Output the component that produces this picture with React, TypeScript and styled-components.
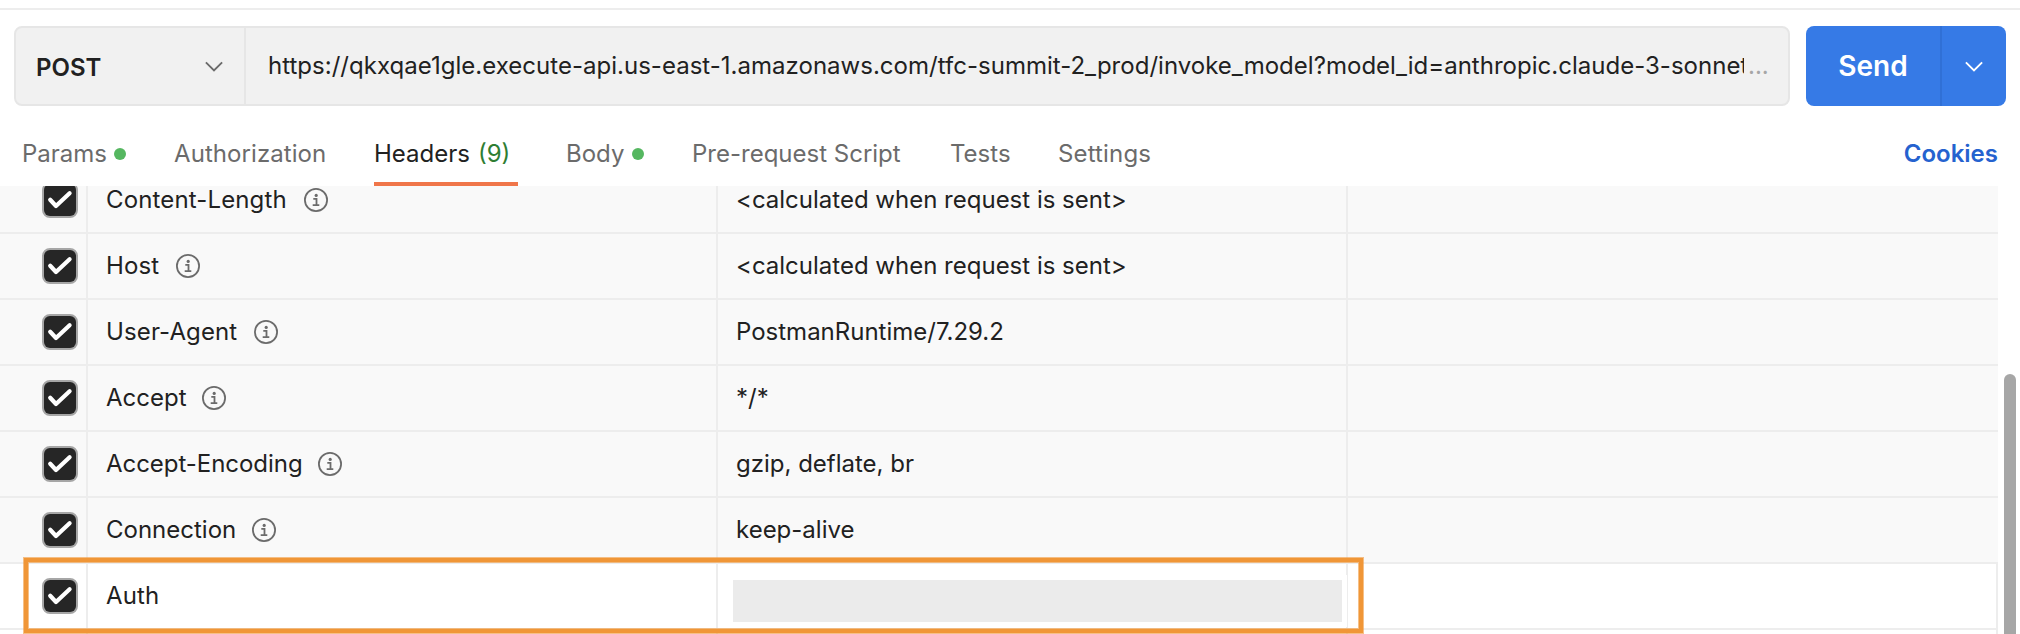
import React from 'react';
import styled, { createGlobalStyle } from 'styled-components';

const GlobalStyle = createGlobalStyle`
  *, *::before, *::after { box-sizing: border-box; }
  html, body { margin: 0; background: #fff; overflow: hidden; }
  body { font-family: Inter, "Liberation Sans", sans-serif; font-size: 24px; color: #212121; }
  button { font: inherit; border: 0; padding: 0; background: none; color: inherit; }
`;

const Page = styled.main`
  width: 2020px;
  height: 634px;
  padding-top: 8px;
  display: flex;
  flex-direction: column;
  overflow: hidden;
`;

const RequestBar = styled.section`
  display: flex;
  gap: 16px;
  height: 98px;
  flex: none;
  padding: 16px 14px 0;
  border-top: 2px solid #ededed;
`;

const UrlBox = styled.div`
  display: flex;
  width: 1776px;
  height: 80px;
  background: #f1f1f1;
  border: 2px solid #e6e6e6;
  border-radius: 8px;
`;

const Method = styled.button`
  display: flex;
  align-items: center;
  justify-content: space-between;
  width: 230px;
  padding: 3px 21px 0 20px;
  border-right: 2px solid #e6e6e6;
  font-weight: 600;
`;

const UrlText = styled.div`
  width: 1498px;
  padding-left: 22px;
  line-height: 76px;
  letter-spacing: 0.02px;
  white-space: nowrap;
  overflow: hidden;
`;

const Ellipsis = styled.span`
  padding-left: 4px;
  line-height: 76px;
  color: #a6a6a6;
`;

const SendGroup = styled.div`
  display: flex;
  width: 200px;
  height: 80px;
  border-radius: 8px;
  overflow: hidden;
  background: #367ae6;
  color: #fff;
`;

const SendButton = styled.button`
  width: 136px;
  border-right: 2px solid #3070d6;
  font-size: 28px;
  font-weight: 600;
`;

const SendMenu = styled.button`
  flex: 1;
  display: flex;
  align-items: center;
  justify-content: center;
  padding-top: 2px;
`;

const TabBar = styled.nav`
  display: flex;
  gap: 48px;
  height: 80px;
  flex: none;
  padding: 16px 22px 0;
`;

const Tab = styled.button<{ $active?: boolean; $width: number; $tracking?: number }>`
  display: flex;
  align-items: center;
  width: ${(p) => p.$width}px;
  height: 64px;
  padding-top: 3px;
  white-space: nowrap;
  letter-spacing: ${(p) => p.$tracking ?? 0}px;
  color: ${(p) => (p.$active ? '#212121' : '#6b6b6b')};
  border-bottom: 4px solid ${(p) => (p.$active ? '#f0764a' : 'transparent')};
`;

const Count = styled.span`
  margin-left: 8px;
  color: #2e7d32;
`;

const Dot = styled.i`
  width: 12px;
  height: 12px;
  margin-left: auto;
  border-radius: 50%;
  background: #55b760;
`;

const Cookies = styled.button`
  height: 60px;
  margin-left: auto;
  padding-top: 3px;
  font-weight: 600;
  color: #2562cf;
`;

const Content = styled.section`
  display: flex;
  gap: 6px;
  height: 448px;
  overflow: hidden;
`;

const Table = styled.div`
  position: relative;
  width: 1998px;
  flex: none;
  margin-top: -18px;
`;

const Row = styled.div<{ $custom?: boolean }>`
  display: grid;
  grid-template-columns: 88px 630px 630px 650px;
  height: 66px;
  border-bottom: 2px solid #ededed;
  background: ${(p) => (p.$custom ? '#fff' : '#f9f9f9')};
`;

const Cell = styled.div<{ $line?: boolean }>`
  display: flex;
  align-items: center;
  gap: 16px;
  padding-left: 18px;
  border-right: ${(p) => (p.$line ? '2px solid #ededed' : '0')};
`;

const CellText = styled.span`
  margin-bottom: 1px;
  white-space: nowrap;
`;

const HeaderName = styled(CellText)<{ $width: number; $tracking: number }>`
  width: ${(p) => p.$width}px;
  letter-spacing: ${(p) => p.$tracking}px;
`;

const CheckCell = styled(Cell)`
  padding-left: 42px;
`;

const RedactedCell = styled(Cell)`
  align-items: flex-start;
  padding: 16px 0 0 15px;
`;

const Redacted = styled.div`
  width: 609px;
  height: 42px;
  flex: none;
  background: #ebebeb;
  box-shadow: 0 0 0 5px #fff;
`;

const Checkbox = styled.span`
  display: flex;
  width: 36px;
  height: 36px;
  border: 2px solid #a6a6a6;
  border-radius: 8px;
  background: #a6a6a6;
`;

const CheckFill = styled.svg`
  width: 32px;
  height: 32px;
  border-radius: 6px;
  background: #262626;
`;

const Highlight = styled.div`
  position: absolute;
  left: 24px;
  top: 390px;
  width: 1339px;
  height: 75px;
  border: 4px solid #f09637;
  box-shadow: 0 0 0 1px rgba(240, 150, 55, 0.6), inset 0 0 0 1px rgba(240, 150, 55, 0.6);
`;

const Scrollbar = styled.div`
  width: 12px;
  height: 400px;
  margin-top: 188px;
  border-radius: 6px;
  background: #a6a6a6;
`;

const Chevron = ({ color }: { color: string }) => (
  <svg width="18" height="13" viewBox="0 0 18 13" fill="none" stroke={color} strokeWidth="1.9">
    <path d="M.9 1.3 9 9.4l8.1-8.1" />
  </svg>
);

const InfoIcon = () => (
  <svg width="24" height="24" viewBox="0 0 24 24" fill="none" stroke="#6b6b6b">
    <circle cx="12" cy="12" r="11.1" strokeWidth="1.8" />
    <path d="M9.3 10.9h3.2v6M8.7 17.1h6.6" strokeWidth="1.8" />
    <circle cx="12.2" cy="7.4" r="1.6" fill="#6b6b6b" stroke="none" />
  </svg>
);

const Check = () => (
  <Checkbox>
    <CheckFill viewBox="0 0 32 32" fill="none" stroke="#fff" strokeWidth="4.2" strokeLinecap="round" strokeLinejoin="round">
      <path d="M6.2 15.8 12 22 25.6 9.3" />
    </CheckFill>
  </Checkbox>
);

const headers = [
  { name: 'Content-Length', width: 182, tracking: 0.14, value: '<calculated when request is sent>' },
  { name: 'Host', width: 54, tracking: 0.15, value: '<calculated when request is sent>' },
  { name: 'User-Agent', width: 132, tracking: 0.12, value: 'PostmanRuntime/7.29.2' },
  { name: 'Accept', width: 80, tracking: 0, value: '*/*' },
  { name: 'Accept-Encoding', width: 196, tracking: -0.04, value: 'gzip, deflate, br' },
  { name: 'Connection', width: 130, tracking: 0, value: 'keep-alive' },
];

export default function App() {
  return (
    <Page>
      <GlobalStyle />
      <RequestBar>
        <UrlBox>
          <Method>
            POST
            <Chevron color="#6b6b6b" />
          </Method>
          <UrlText>
            https://qkxqae1gle.execute-api.us-east-1.amazonaws.com/tfc-summit-2_prod/invoke_model?model_id=anthropic.claude-3-sonnet
          </UrlText>
          <Ellipsis>...</Ellipsis>
        </UrlBox>
        <SendGroup>
          <SendButton>Send</SendButton>
          <SendMenu>
            <Chevron color="#fff" />
          </SendMenu>
        </SendGroup>
      </RequestBar>
      <TabBar>
        <Tab $width={104}>Params<Dot /></Tab>
        <Tab $width={152} $tracking={0.07}>Authorization</Tab>
        <Tab $active $width={144}>Headers<Count>(9)</Count></Tab>
        <Tab $width={78}>Body<Dot /></Tab>
        <Tab $width={210}>Pre-request Script</Tab>
        <Tab $width={60}>Tests</Tab>
        <Tab $width={94} $tracking={0.15}>Settings</Tab>
        <Cookies>Cookies</Cookies>
      </TabBar>
      <Content>
        <Table>
          {headers.map((h) => (
            <Row key={h.name}>
              <CheckCell $line><Check /></CheckCell>
              <Cell $line>
                <HeaderName $width={h.width} $tracking={h.tracking}>{h.name}</HeaderName>
                <InfoIcon />
              </Cell>
              <Cell $line><CellText>{h.value}</CellText></Cell>
              <Cell />
            </Row>
          ))}
          <Row $custom>
            <CheckCell $line><Check /></CheckCell>
            <Cell $line><HeaderName $width={54} $tracking={0.15}>Auth</HeaderName></Cell>
            <RedactedCell $line><Redacted /></RedactedCell>
            <Cell $line />
          </Row>
          <Row $custom>
            <Cell $line />
            <Cell $line />
            <Cell $line />
            <Cell $line />
          </Row>
          <Highlight />
        </Table>
        <Scrollbar />
      </Content>
    </Page>
  );
}
